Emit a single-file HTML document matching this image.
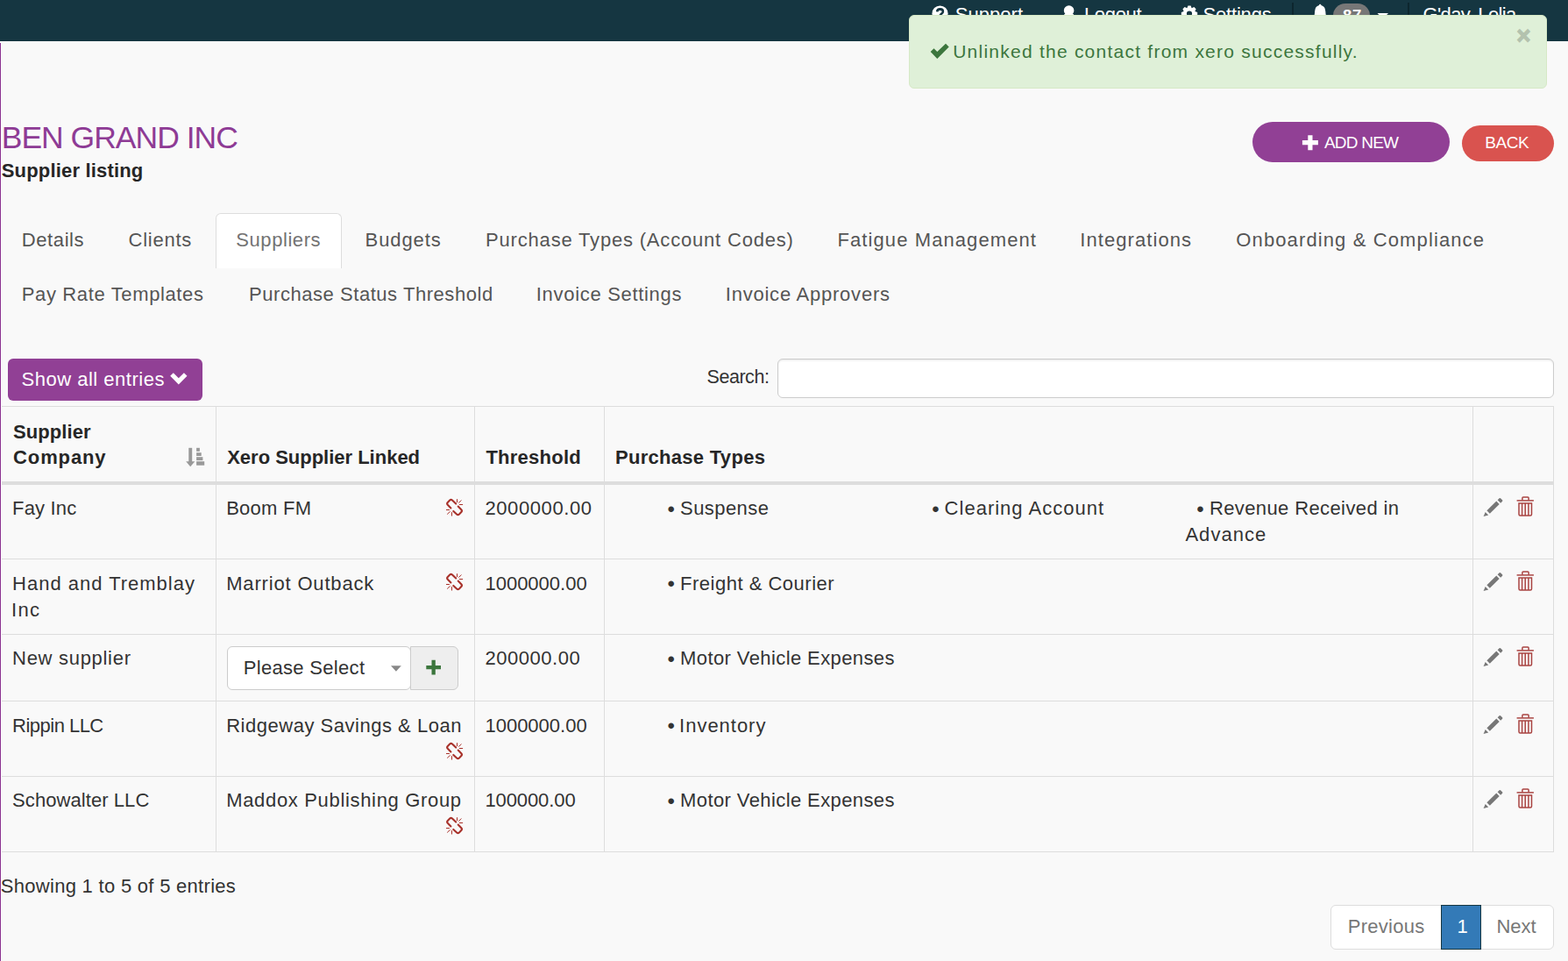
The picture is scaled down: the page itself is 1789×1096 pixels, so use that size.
<!DOCTYPE html>
<html lang="en">
<head>
<meta charset="utf-8">
<title>BEN GRAND INC - Supplier listing</title>
<style>
*{box-sizing:border-box}
html,body{margin:0;padding:0}
body{width:1789px;height:1096px;overflow:hidden;background:#f9f9f9;color:#333;
 font-family:"Liberation Sans",sans-serif;font-size:22px;line-height:30px;position:relative}
.t{position:absolute;white-space:nowrap;margin:0;padding:0;font-weight:400;font-family:inherit;font-size:22px;line-height:30px;text-decoration:none;background:none;border:0;display:block}
.g{position:absolute;left:0;top:0;width:0;height:0}
ul,li{list-style:none;margin:0;padding:0;display:contents}
svg{position:absolute;overflow:visible}
#topbar{position:absolute;left:0;top:0;width:1789px;height:46.5px;background:#153641;overflow:hidden}
.vsep{position:absolute;top:3px;width:1.5px;height:44px;background:#0d262e}
#badge{position:absolute;left:1521px;top:3.7px;width:42px;height:28px;border-radius:14px;background:#777}
#leftline{position:absolute;left:0;top:49px;width:1px;height:1047px;background:#8b3390}
#leftwhite{position:absolute;left:1px;top:49px;width:1.3px;height:1048px;background:#fff}
#alertbox{position:absolute;left:1037px;top:16.8px;width:728.2px;height:83.8px;background:#dff0d8;border:1px solid #d6e9c6;border-radius:6px}
#addnew{position:absolute;left:1428.7px;top:138.7px;width:225.3px;height:46.1px;border-radius:23px;background:#914095}
#back{position:absolute;left:1667.9px;top:143px;width:105.2px;height:40.8px;border-radius:21px;background:#d9534f}
#activetab{position:absolute;left:246px;top:243px;width:144px;height:62.5px;background:#fff;border:1px solid #ddd;border-bottom:0;border-radius:6px 6px 0 0}
#showall{position:absolute;left:8.9px;top:408.9px;width:222.2px;height:48.1px;border-radius:6px;background:#914095}
#searchbox{position:absolute;left:887px;top:409px;width:886px;height:45px;background:#fff;border:1px solid #ccc;border-radius:6px;box-shadow:inset 0 1.5px 1.5px rgba(0,0,0,.075)}
table{position:absolute;left:2px;top:463px;width:1771px;border-collapse:separate;border-spacing:0;border-top:1px solid #ddd;border-right:1px solid #ddd;table-layout:fixed}
th,td{vertical-align:top;text-align:left;padding:0;border-right:1px solid #ddd;border-bottom:1px solid #ddd;font-weight:400;position:relative;white-space:nowrap}
th:last-child,td:last-child{border-right:0}
th{color:#262626;border-bottom:4px solid #ddd;height:89px}
#pagerbox{position:absolute;left:1518px;top:1032px;width:255px;height:51px;border:1px solid #ddd;border-radius:6px;background:#fff}
#pageron{position:absolute;left:1644px;top:1032px;width:46px;height:51px;background:#337ab7;border:1px solid #153641}
#selbox{position:absolute;width:210px;height:50.2px;background:#fff;border:1px solid #ccc;border-radius:6px}
#selplus{position:absolute;width:54.7px;height:50.2px;background:#eee;border:1px solid #ccc;border-radius:0 6px 6px 0}
</style>
</head>
<body>
<header id="topbar">
<svg style="left:1063px;top:5.5px" width="19" height="19" viewBox="0 0 19 19"><circle cx="9.5" cy="9.5" r="9.1" fill="#fff"/><path fill="none" stroke="#153641" stroke-width="2.6" d="M6.2,7.4 Q6.4,4.4 9.6,4.4 Q12.9,4.5 12.9,7.2 Q12.9,8.8 11,9.9 Q9.6,10.7 9.6,12.2"/><circle cx="9.6" cy="14.9" r="1.5" fill="#153641"/></svg><a class="t" style="left:1089.8px;top:2px;letter-spacing:0.04px;color:#fff">Support</a>
<svg style="left:1211px;top:6px" width="18" height="19" viewBox="0 0 18 19"><g fill="#fff"><circle cx="8.6" cy="6" r="5.8"/><path d="M1.7,18 Q1.7,9.6 5.2,9.3 Q8.6,12 12,9.3 Q15.5,9.6 15.5,18 Z"/></g></svg><a class="t" style="left:1236.9px;top:2px;letter-spacing:-0.32px;color:#fff">Logout</a>
<svg style="left:1347px;top:6px" width="20" height="20" viewBox="0 0 20 20"><path fill="#fff" fill-rule="evenodd" d="M7.38,3.22 L8.43,0.43 L11.57,0.43 L12.62,3.22 L12.66,3.23 L15.37,2.01 L17.59,4.23 L16.37,6.94 L16.38,6.98 L19.17,8.03 L19.17,11.17 L16.38,12.22 L16.37,12.26 L17.59,14.97 L15.37,17.19 L12.66,15.97 L12.62,15.98 L11.57,18.77 L8.43,18.77 L7.38,15.98 L7.34,15.97 L4.63,17.19 L2.41,14.97 L3.63,12.26 L3.62,12.22 L0.83,11.17 L0.83,8.03 L3.62,6.98 L3.63,6.94 L2.41,4.23 L4.63,2.01 L7.34,3.23 Z M13.10,9.60 A3.1,3.1 0 1 0 6.90,9.60 A3.1,3.1 0 1 0 13.10,9.60 Z"/></svg><a class="t" style="left:1372.6px;top:2px;letter-spacing:-0.2px;color:#fff">Settings</a>
<div class="vsep" style="left:1474px"></div>
<svg style="left:1495px;top:4px" width="22" height="20" viewBox="0 0 22 20"><path fill="#fff" d="M11.2,0.7 Q12.4,0.7 12.4,2 Q17,3.2 17.3,9 Q17.5,15.5 20.5,18 L2,18 Q5,15.5 5.1,9 Q5.4,3.2 10,2 Q10,0.7 11.2,0.7 Z"/></svg><div id="badge"></div><span class="t" style="left:1532.0px;top:3px;font-size:18.5px;letter-spacing:0.71px;font-weight:700;color:#fff">87</span><svg style="left:1571px;top:15px" width="14" height="7" viewBox="0 0 14 7"><path fill="#fff" d="M0.5,0.1 L13.0,0.1 L6.8,6.4 Z"/></svg>
<div class="vsep" style="left:1606px"></div>
<a class="t" style="left:1623.6px;top:2px;letter-spacing:-0.66px;color:#fff">G'day, Lelia</a>
</header>
<div id="leftline"></div><div id="leftwhite"></div>

<main class="g">
<h1 class="t" style="left:1.7px;top:134px;font-size:35.5px;line-height:46px;letter-spacing:-0.99px;color:#8e3b95">BEN GRAND INC</h1>
<h2 class="t" style="left:1.7px;top:180px;letter-spacing:0.18px;font-weight:700;color:#262626">Supplier listing</h2>
<div class="g"><div id="addnew"></div>
<svg style="left:1484px;top:153px" width="21" height="20" viewBox="0 0 21 20"><path fill="#fff" d="M8.3,1.2 L13.5,1.2 L13.5,7.1 L19.9,7.1 L19.9,12.3 L13.5,12.3 L13.5,18.2 L8.3,18.2 L8.3,12.3 L1.9,12.3 L1.9,7.1 L8.3,7.1 Z"/></svg><span class="t" style="left:1510.9px;top:148px;font-size:19px;letter-spacing:-0.76px;color:#fff">ADD NEW</span>
</div>
<div class="g"><div id="back"></div>
<span class="t" style="left:1694.3px;top:148px;font-size:19px;letter-spacing:-0.49px;color:#fff">BACK</span>
</div>

<nav class="g"><div id="activetab"></div>
<a class="t" style="left:24.8px;top:259px;letter-spacing:0.59px;color:#555">Details</a>
<a class="t" style="left:146.6px;top:259px;letter-spacing:0.74px;color:#555">Clients</a>
<a class="t" style="left:269.3px;top:259px;letter-spacing:0.57px;color:#737373">Suppliers</a>
<a class="t" style="left:416.6px;top:259px;letter-spacing:0.9px;color:#555">Budgets</a>
<a class="t" style="left:554.1px;top:259px;letter-spacing:0.81px;color:#555">Purchase Types (Account Codes)</a>
<a class="t" style="left:955.5px;top:259px;letter-spacing:1.09px;color:#555">Fatigue Management</a>
<a class="t" style="left:1232.2px;top:259px;letter-spacing:1.08px;color:#555">Integrations</a>
<a class="t" style="left:1410.3px;top:259px;letter-spacing:1.12px;color:#555">Onboarding &amp; Compliance</a>
<a class="t" style="left:24.8px;top:321px;letter-spacing:0.63px;color:#555">Pay Rate Templates</a>
<a class="t" style="left:284.0px;top:321px;letter-spacing:0.55px;color:#555">Purchase Status Threshold</a>
<a class="t" style="left:611.8px;top:321px;letter-spacing:0.69px;color:#555">Invoice Settings</a>
<a class="t" style="left:827.8px;top:321px;letter-spacing:0.77px;color:#555">Invoice Approvers</a>
</nav>

<div class="g"><div id="showall"></div>
<span class="t" style="left:24.5px;top:418px;letter-spacing:0.51px;color:#fff">Show all entries</span><svg style="left:194px;top:425px" width="20" height="14" viewBox="0 0 20 14"><path fill="#fff" d="M0.2,3.8 L3.8,0.2 L9.8,6.3 L15.9,0.2 L19.5,3.8 L9.8,13.4 Z"/></svg>
</div>
<div class="g">
<label class="t" style="left:806.5px;top:415px;font-size:21.5px;letter-spacing:-0.45px;color:#333">Search:</label>
<div id="searchbox"></div></div>

<table>
<colgroup><col style="width:245px"><col style="width:295px"><col style="width:148px"><col style="width:991px"><col style="width:91px"></colgroup>
<thead><tr><th><span class="t" style="left:13.1px;top:14px;letter-spacing:0.06px;font-weight:700">Supplier</span><span class="t" style="left:13.1px;top:43px;letter-spacing:0.88px;font-weight:700">Company</span><svg style="left:209px;top:45px" width="24" height="24" viewBox="0 0 24 24"><g fill="#999"><rect x="4.3" y="1.8" width="3.9" height="16.2"/><path d="M1.2,17.3 L11.3,17.3 L6.2,23.2 Z"/><rect x="13.1" y="1.8" width="3.8" height="4.0"/><rect x="13.1" y="7.2" width="5.6" height="3.8"/><rect x="13.1" y="12.2" width="7.3" height="3.9"/><rect x="13.1" y="17.2" width="9.1" height="4.5"/></g></svg></th><th><span class="t" style="left:12.2px;top:43px;letter-spacing:-0.01px;font-weight:700">Xero Supplier Linked</span></th><th><span class="t" style="left:12.4px;top:43px;letter-spacing:0.26px;font-weight:700">Threshold</span></th><th><span class="t" style="left:12.0px;top:43px;letter-spacing:0.29px;font-weight:700">Purchase Types</span></th><th></th></tr></thead>
<tbody>
<tr style="height:85px"><td><span class="t" style="left:12.1px;top:12px;letter-spacing:0.16px">Fay Inc</span></td><td><span class="t" style="left:11.2px;top:12px;letter-spacing:0.26px">Boom FM</span><svg style="left:261px;top:15px" width="22" height="22" viewBox="0 0 22 22"><g fill="none" stroke="#a8322b" stroke-linecap="round" stroke-linejoin="round"><path stroke-width="2.1" d="M12.2,6.6 L8.0,2.5 Q6.6,1.2 5.2,2.5 L2.8,4.9 Q1.5,6.3 2.8,7.7 L6.4,11.4"/><path stroke-width="2.1" d="M14.7,9.6 L18.3,13.3 Q19.6,14.7 18.3,16.1 L15.9,18.5 Q14.5,19.8 13.1,18.5 L9.3,14.9"/><g stroke-width="1" stroke-linecap="butt"><path d="M13.5,1.2 L13.5,5.1 M15.3,5.6 L18.4,2.5 M15.9,7.5 L20.1,7.5"/><path d="M1.0,13.5 L4.9,13.5 M2.2,18.5 L5.6,15.3 M7.5,16.2 L7.5,20.5"/></g></g></svg></td><td><span class="t" style="left:11.4px;top:12px;letter-spacing:0.6px">2000000.00</span></td><td><ul><li><span class="t" style="left:71.4px;top:13px;font-size:24px">•</span><span class="t" style="left:86.1px;top:12px;letter-spacing:0.43px">Suspense</span></li><li><span class="t" style="left:373.2px;top:13px;font-size:24px">•</span><span class="t" style="left:387.6px;top:12px;letter-spacing:1.01px">Clearing Account</span></li><li><span class="t" style="left:675.2px;top:13px;font-size:24px">•</span><span class="t" style="left:689.9px;top:12px;letter-spacing:0.39px">Revenue Received in</span><span class="t" style="left:662.4px;top:42px;letter-spacing:1.04px">Advance</span></li></ul></td><td><svg style="left:11px;top:14px" width="24" height="24" viewBox="0 0 24 24"><g fill="#777"><path d="M4.4,15.3 L15.3,4.5 L18.7,7.9 L7.8,18.8 Z"/><path d="M16.6,3.2 L18.6,1.2 Q19.3,0.6 20.0,1.2 L22.1,3.3 Q22.7,4.0 22.1,4.7 L20.1,6.7 Z"/><path d="M2.7,16.9 L6.2,20.4 L0.6,22.0 Z"/></g></svg><svg style="left:49px;top:12px" width="22" height="26" viewBox="0 0 22 26"><g fill="none" stroke="#a94442" stroke-width="1.5"><path d="M0.6,5.9 L19.9,5.9" /><path d="M6.9,5.5 L6.9,3.0 Q6.9,2.0 7.9,2.0 L13.1,2.0 Q14.1,2.0 14.1,3.0 L14.1,5.5"/><path d="M3.0,8.2 L3.0,21.6 Q3.0,23.1 4.5,23.1 L16.0,23.1 Q17.5,23.1 17.5,21.6 L17.5,8.2 M2.3,8.9 L18.2,8.9"/><path d="M6.6,9.0 L6.6,23.0 M10.2,9.0 L10.2,23.0 M13.9,9.0 L13.9,23.0"/></g></svg></td></tr>
<tr style="height:86px"><td><span class="t" style="left:12.1px;top:13px;letter-spacing:0.99px">Hand and Tremblay</span><span class="t" style="left:11.1px;top:43px;letter-spacing:1.28px">Inc</span></td><td><span class="t" style="left:11.2px;top:13px;letter-spacing:0.83px">Marriot Outback</span><svg style="left:261px;top:15.2px" width="22" height="22" viewBox="0 0 22 22"><g fill="none" stroke="#a8322b" stroke-linecap="round" stroke-linejoin="round"><path stroke-width="2.1" d="M12.2,6.6 L8.0,2.5 Q6.6,1.2 5.2,2.5 L2.8,4.9 Q1.5,6.3 2.8,7.7 L6.4,11.4"/><path stroke-width="2.1" d="M14.7,9.6 L18.3,13.3 Q19.6,14.7 18.3,16.1 L15.9,18.5 Q14.5,19.8 13.1,18.5 L9.3,14.9"/><g stroke-width="1" stroke-linecap="butt"><path d="M13.5,1.2 L13.5,5.1 M15.3,5.6 L18.4,2.5 M15.9,7.5 L20.1,7.5"/><path d="M1.0,13.5 L4.9,13.5 M2.2,18.5 L5.6,15.3 M7.5,16.2 L7.5,20.5"/></g></g></svg></td><td><span class="t" style="left:11.4px;top:13px;letter-spacing:0.01px">1000000.00</span></td><td><ul><li><span class="t" style="left:71.4px;top:13px;font-size:24px">•</span><span class="t" style="left:86.1px;top:13px;letter-spacing:0.5px">Freight &amp; Courier</span></li></ul></td><td><svg style="left:11px;top:14.4px" width="24" height="24" viewBox="0 0 24 24"><g fill="#777"><path d="M4.4,15.3 L15.3,4.5 L18.7,7.9 L7.8,18.8 Z"/><path d="M16.6,3.2 L18.6,1.2 Q19.3,0.6 20.0,1.2 L22.1,3.3 Q22.7,4.0 22.1,4.7 L20.1,6.7 Z"/><path d="M2.7,16.9 L6.2,20.4 L0.6,22.0 Z"/></g></svg><svg style="left:49px;top:12.4px" width="22" height="26" viewBox="0 0 22 26"><g fill="none" stroke="#a94442" stroke-width="1.5"><path d="M0.6,5.9 L19.9,5.9" /><path d="M6.9,5.5 L6.9,3.0 Q6.9,2.0 7.9,2.0 L13.1,2.0 Q14.1,2.0 14.1,3.0 L14.1,5.5"/><path d="M3.0,8.2 L3.0,21.6 Q3.0,23.1 4.5,23.1 L16.0,23.1 Q17.5,23.1 17.5,21.6 L17.5,8.2 M2.3,8.9 L18.2,8.9"/><path d="M6.6,9.0 L6.6,23.0 M10.2,9.0 L10.2,23.0 M13.9,9.0 L13.9,23.0"/></g></svg></td></tr>
<tr style="height:76px"><td><span class="t" style="left:12.1px;top:12px;letter-spacing:0.7px">New supplier</span></td><td><div id="selbox" style="left:12px;top:12.5px"></div><div id="selplus" style="left:221px;top:12.5px"></div><span class="t" style="left:30.7px;top:23px;letter-spacing:0.32px">Please Select</span><svg style="left:199px;top:35px" width="12" height="7" viewBox="0 0 12 7"><path fill="#888" d="M0.0,0.2 L11.8,0.2 L5.9,6.8 Z"/></svg><svg style="left:238px;top:27px" width="19" height="19" viewBox="0 0 19 19"><path fill="#3c763d" d="M7.5,1.8 L11.8,1.8 L11.8,7.9 L18.0,7.9 L18.0,12.2 L11.8,12.2 L11.8,18.4 L7.5,18.4 L7.5,12.2 L1.3,12.2 L1.3,7.9 L7.5,7.9 Z"/></svg></td><td><span class="t" style="left:11.4px;top:12px;letter-spacing:0.53px">200000.00</span></td><td><ul><li><span class="t" style="left:71.4px;top:13px;font-size:24px">•</span><span class="t" style="left:86.1px;top:12px;letter-spacing:0.4px">Motor Vehicle Expenses</span></li></ul></td><td><svg style="left:11px;top:14.2px" width="24" height="24" viewBox="0 0 24 24"><g fill="#777"><path d="M4.4,15.3 L15.3,4.5 L18.7,7.9 L7.8,18.8 Z"/><path d="M16.6,3.2 L18.6,1.2 Q19.3,0.6 20.0,1.2 L22.1,3.3 Q22.7,4.0 22.1,4.7 L20.1,6.7 Z"/><path d="M2.7,16.9 L6.2,20.4 L0.6,22.0 Z"/></g></svg><svg style="left:49px;top:12.2px" width="22" height="26" viewBox="0 0 22 26"><g fill="none" stroke="#a94442" stroke-width="1.5"><path d="M0.6,5.9 L19.9,5.9" /><path d="M6.9,5.5 L6.9,3.0 Q6.9,2.0 7.9,2.0 L13.1,2.0 Q14.1,2.0 14.1,3.0 L14.1,5.5"/><path d="M3.0,8.2 L3.0,21.6 Q3.0,23.1 4.5,23.1 L16.0,23.1 Q17.5,23.1 17.5,21.6 L17.5,8.2 M2.3,8.9 L18.2,8.9"/><path d="M6.6,9.0 L6.6,23.0 M10.2,9.0 L10.2,23.0 M13.9,9.0 L13.9,23.0"/></g></svg></td></tr>
<tr style="height:86px"><td><span class="t" style="left:12.1px;top:13px;letter-spacing:-0.52px">Rippin LLC</span></td><td><span class="t" style="left:11.2px;top:13px;letter-spacing:0.52px">Ridgeway Savings &amp; Loan</span><svg style="left:261px;top:46px" width="22" height="22" viewBox="0 0 22 22"><g fill="none" stroke="#a8322b" stroke-linecap="round" stroke-linejoin="round"><path stroke-width="2.1" d="M12.2,6.6 L8.0,2.5 Q6.6,1.2 5.2,2.5 L2.8,4.9 Q1.5,6.3 2.8,7.7 L6.4,11.4"/><path stroke-width="2.1" d="M14.7,9.6 L18.3,13.3 Q19.6,14.7 18.3,16.1 L15.9,18.5 Q14.5,19.8 13.1,18.5 L9.3,14.9"/><g stroke-width="1" stroke-linecap="butt"><path d="M13.5,1.2 L13.5,5.1 M15.3,5.6 L18.4,2.5 M15.9,7.5 L20.1,7.5"/><path d="M1.0,13.5 L4.9,13.5 M2.2,18.5 L5.6,15.3 M7.5,16.2 L7.5,20.5"/></g></g></svg></td><td><span class="t" style="left:11.4px;top:13px;letter-spacing:0.01px">1000000.00</span></td><td><ul><li><span class="t" style="left:71.4px;top:13px;font-size:24px">•</span><span class="t" style="left:85.1px;top:13px;letter-spacing:0.98px">Inventory</span></li></ul></td><td><svg style="left:11px;top:14.6px" width="24" height="24" viewBox="0 0 24 24"><g fill="#777"><path d="M4.4,15.3 L15.3,4.5 L18.7,7.9 L7.8,18.8 Z"/><path d="M16.6,3.2 L18.6,1.2 Q19.3,0.6 20.0,1.2 L22.1,3.3 Q22.7,4.0 22.1,4.7 L20.1,6.7 Z"/><path d="M2.7,16.9 L6.2,20.4 L0.6,22.0 Z"/></g></svg><svg style="left:49px;top:12.6px" width="22" height="26" viewBox="0 0 22 26"><g fill="none" stroke="#a94442" stroke-width="1.5"><path d="M0.6,5.9 L19.9,5.9" /><path d="M6.9,5.5 L6.9,3.0 Q6.9,2.0 7.9,2.0 L13.1,2.0 Q14.1,2.0 14.1,3.0 L14.1,5.5"/><path d="M3.0,8.2 L3.0,21.6 Q3.0,23.1 4.5,23.1 L16.0,23.1 Q17.5,23.1 17.5,21.6 L17.5,8.2 M2.3,8.9 L18.2,8.9"/><path d="M6.6,9.0 L6.6,23.0 M10.2,9.0 L10.2,23.0 M13.9,9.0 L13.9,23.0"/></g></svg></td></tr>
<tr style="height:86px"><td><span class="t" style="left:12.1px;top:12px;letter-spacing:0.07px">Schowalter LLC</span></td><td><span class="t" style="left:11.2px;top:12px;letter-spacing:0.67px">Maddox Publishing Group</span><svg style="left:261px;top:44.8px" width="22" height="22" viewBox="0 0 22 22"><g fill="none" stroke="#a8322b" stroke-linecap="round" stroke-linejoin="round"><path stroke-width="2.1" d="M12.2,6.6 L8.0,2.5 Q6.6,1.2 5.2,2.5 L2.8,4.9 Q1.5,6.3 2.8,7.7 L6.4,11.4"/><path stroke-width="2.1" d="M14.7,9.6 L18.3,13.3 Q19.6,14.7 18.3,16.1 L15.9,18.5 Q14.5,19.8 13.1,18.5 L9.3,14.9"/><g stroke-width="1" stroke-linecap="butt"><path d="M13.5,1.2 L13.5,5.1 M15.3,5.6 L18.4,2.5 M15.9,7.5 L20.1,7.5"/><path d="M1.0,13.5 L4.9,13.5 M2.2,18.5 L5.6,15.3 M7.5,16.2 L7.5,20.5"/></g></g></svg></td><td><span class="t" style="left:11.4px;top:12px;letter-spacing:-0.09px">100000.00</span></td><td><ul><li><span class="t" style="left:71.4px;top:13px;font-size:24px">•</span><span class="t" style="left:86.1px;top:12px;letter-spacing:0.4px">Motor Vehicle Expenses</span></li></ul></td><td><svg style="left:11px;top:14.2px" width="24" height="24" viewBox="0 0 24 24"><g fill="#777"><path d="M4.4,15.3 L15.3,4.5 L18.7,7.9 L7.8,18.8 Z"/><path d="M16.6,3.2 L18.6,1.2 Q19.3,0.6 20.0,1.2 L22.1,3.3 Q22.7,4.0 22.1,4.7 L20.1,6.7 Z"/><path d="M2.7,16.9 L6.2,20.4 L0.6,22.0 Z"/></g></svg><svg style="left:49px;top:12.2px" width="22" height="26" viewBox="0 0 22 26"><g fill="none" stroke="#a94442" stroke-width="1.5"><path d="M0.6,5.9 L19.9,5.9" /><path d="M6.9,5.5 L6.9,3.0 Q6.9,2.0 7.9,2.0 L13.1,2.0 Q14.1,2.0 14.1,3.0 L14.1,5.5"/><path d="M3.0,8.2 L3.0,21.6 Q3.0,23.1 4.5,23.1 L16.0,23.1 Q17.5,23.1 17.5,21.6 L17.5,8.2 M2.3,8.9 L18.2,8.9"/><path d="M6.6,9.0 L6.6,23.0 M10.2,9.0 L10.2,23.0 M13.9,9.0 L13.9,23.0"/></g></svg></td></tr>
</tbody>
</table>

<div class="t" style="left:0.8px;top:996px;letter-spacing:0.29px;color:#333">Showing 1 to 5 of 5 entries</div>
<nav class="g"><div id="pagerbox"></div><div id="pageron"></div>
<a class="t" style="left:1537.8px;top:1042px;letter-spacing:0.26px;color:#777">Previous</a>
<a class="t" style="left:1662.5px;top:1042px;letter-spacing:0px;color:#fff">1</a>
<a class="t" style="left:1707.4px;top:1042px;letter-spacing:-0.01px;color:#777">Next</a>
</nav>
</main>

<div class="g" role="alert"><div id="alertbox"></div>
<svg style="left:1061px;top:49px" width="23" height="19" viewBox="0 0 23 19"><path fill="#3c763d" d="M0.7,10.0 L4.5,6.2 L8.3,10.1 L18.0,0.8 L21.7,4.5 L8.3,17.9 Z"/></svg>
<span class="t" style="left:1087.2px;top:44px;font-size:21px;letter-spacing:1.24px;color:#3c763d">Unlinked the contact from xero successfully.</span>
<button class="t" style="left:1730.5px;top:26px;font-size:27px;letter-spacing:0px;font-weight:700;color:#b3c2ae;-webkit-text-stroke:1.3px #b3c2ae">×</button>
</div>
</body>
</html>
